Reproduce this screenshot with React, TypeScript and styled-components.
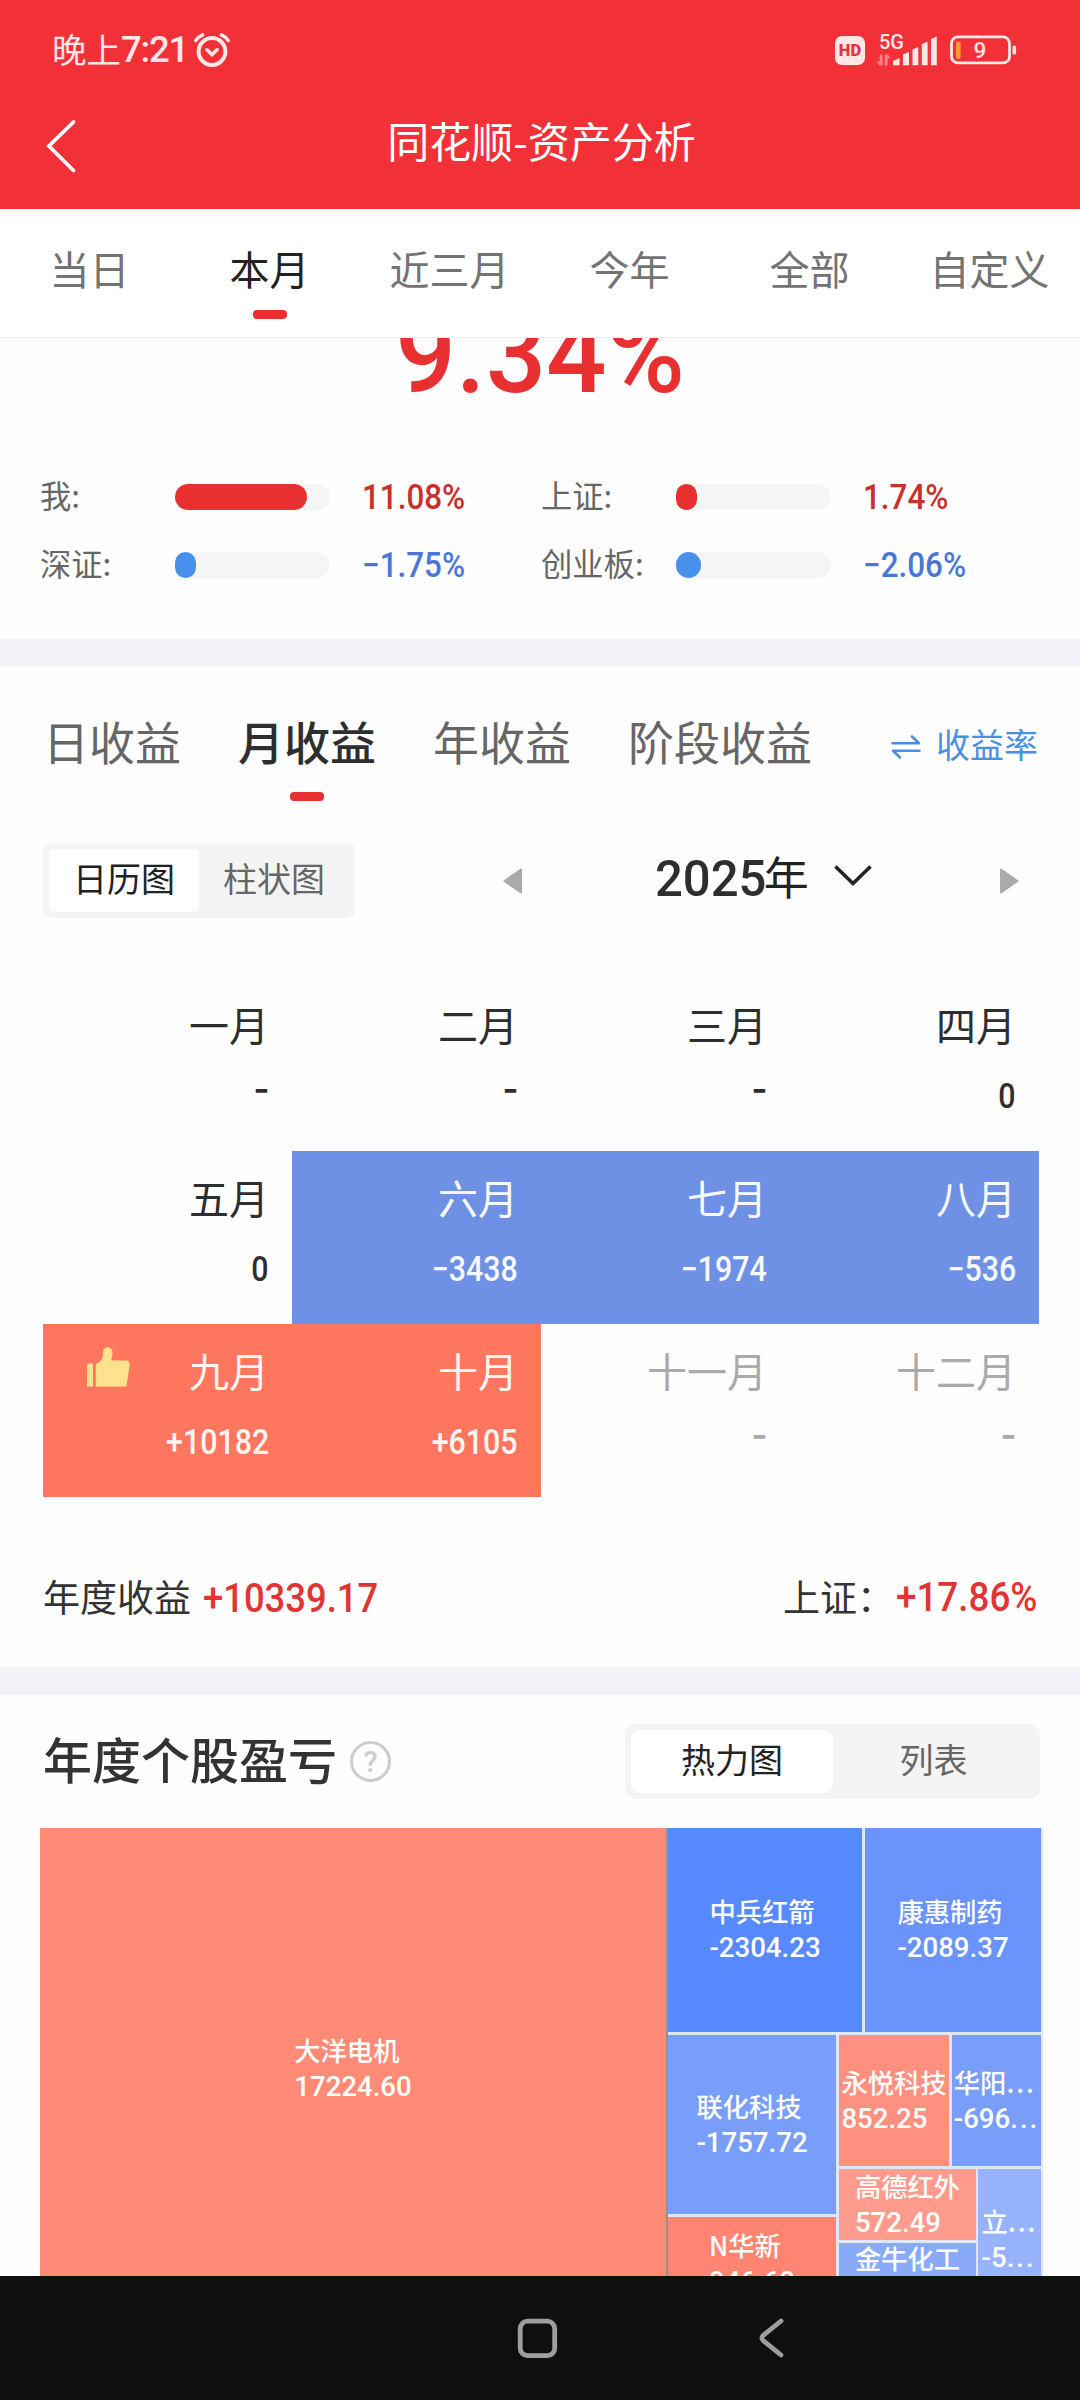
import React from "react";
import styled, { createGlobalStyle } from "styled-components";

const CJK = '"Noto Sans CJK SC", "Noto Sans", sans-serif';
const NUM = 'Roboto, "Noto Sans CJK SC", sans-serif';

const GlobalStyle = createGlobalStyle`
  *, *::before, *::after { box-sizing: border-box; }
  html, body { margin: 0; padding: 0; background: #fff; }
  body { font-family: ${CJK}; color: #333; }
`;

const Screen = styled.div`
  width: 1080px;
  height: 2400px;
  display: flex;
  flex-direction: column;
  overflow: hidden;
  background: #fefefe;
`;

/* ---------- header ---------- */
const Header = styled.header`
  flex: none;
  height: 209px;
  background: #f23037;
  color: #fff;
`;
const StatusBar = styled.div`
  height: 100px;
  padding: 0 63px 0 52px;
  display: flex;
  align-items: center;
  color: #ffe6e7;
`;
const Clock = styled.div`
  display: flex;
  align-items: center;
  font-size: 34.5px;
  line-height: 50px;
  margin-top: -4px;
`;
const ClockDigits = styled.span`
  font-family: ${NUM};
  font-size: 36.5px;
  font-weight: 500;
  letter-spacing: -1.2px;
  margin-top: 4px;
`;
const AlarmIcon = styled.svg`
  margin-left: 5px;
`;
const StatusRight = styled.div`
  margin-left: auto;
  display: flex;
  align-items: center;
`;
const HdBadge = styled.span`
  width: 30px;
  height: 29px;
  border-radius: 7px;
  background: #ffe6e7;
  color: #e0353c;
  font: 900 16.5px/30px ${NUM};
  text-align: center;
`;
const Network = styled.div`
  width: 61px;
  height: 32px;
  margin: -1px 13px 0 11px;
  display: grid;
`;
const NetLabel = styled.span`
  grid-area: 1 / 1;
  padding-left: 3px;
  font: 500 20px/16px ${NUM};
`;
const NetBars = styled.svg`
  grid-area: 1 / 1;
`;
const TitleBar = styled.div`
  height: 80px;
  display: grid;
  grid-template-columns: 120px 1fr 120px;
  align-items: center;
`;
const Title = styled.h1`
  margin: 0;
  font-size: 42px;
  font-weight: 400;
  line-height: 80px;
  text-align: center;
  padding-left: 3px;
`;
const BackIcon = styled.svg`
  margin: 12px 0 0 44px;
`;

/* ---------- period tabs ---------- */
const PeriodTabs = styled.nav`
  flex: none;
  height: 129px;
  display: flex;
  border-bottom: 1px solid #f0f0f0;
  background: #fff;
`;
const PeriodTab = styled.button<{ $on?: boolean }>`
  flex: 0 0 180px;
  padding: 29px 1px 0 0;
  border: 0;
  background: none;
  display: flex;
  flex-direction: column;
  align-items: center;
  font: 400 40px/60px ${CJK};
  color: ${(p) => (p.$on ? "#222" : "#737373")};
`;
const Underline = styled.i<{ $top: number }>`
  display: block;
  width: 34px;
  height: 9px;
  margin-top: ${(p) => p.$top}px;
  border-radius: 4px;
  background: #e83030;
`;

/* ---------- numbers ---------- */
const Num = styled.span<{ $size: number; $sx?: number; $color?: string; $from?: string; $w?: number }>`
  display: inline-block;
  font-family: ${NUM};
  font-size: ${(p) => p.$size}px;
  font-weight: ${(p) => p.$w ?? 500};
  line-height: 1;
  white-space: nowrap;
  color: ${(p) => p.$color ?? "inherit"};
  transform: scaleX(${(p) => p.$sx ?? 1});
  transform-origin: ${(p) => p.$from ?? "left"} center;
`;

/* ---------- body ---------- */
const Body = styled.main`
  flex: 1;
  min-height: 0;
  overflow: hidden;
`;
const Divider = styled.div`
  height: 28px;
  background: #f2f3f8;
`;
const Summary = styled.section`
  height: 301px;
`;
const Hero = styled.div`
  height: 125px;
  overflow: hidden;
  text-align: center;
`;
const HeroValue = styled.div`
  margin-top: -40px;
  line-height: 0;
`;
const Benchmarks = styled.div`
  display: grid;
  grid-template-columns: 501px 1fr;
  grid-auto-rows: 68px;
  padding-left: 40px;
`;
const Benchmark = styled.div`
  display: flex;
  align-items: center;
`;
const BenchLabel = styled.span`
  width: 135px;
  font-size: 31.3px;
  line-height: 44px;
  margin-top: -5px;
  color: #666;
`;
const Track = styled.div`
  width: 155px;
  height: 26px;
  margin-right: 32px;
  border-radius: 13px;
  background: #f4f6f6;
`;
const Fill = styled.div<{ $up: boolean; $w: number }>`
  width: ${(p) => p.$w}px;
  height: 100%;
  border-radius: 13px;
  background: ${(p) => (p.$up ? "#e83030" : "#4791ec")};
`;

/* ---------- calendar ---------- */
const ProfitTabs = styled.div`
  height: 134px;
  padding: 43px 41px 0 43px;
  display: flex;
  gap: 57px;
`;
const ProfitTab = styled.button<{ $on?: boolean }>`
  padding: 0;
  border: 0;
  background: none;
  display: flex;
  flex-direction: column;
  align-items: center;
  font: ${(p) => (p.$on ? 500 : 400)} 46px/61px ${CJK};
  color: ${(p) => (p.$on ? "#2e2e2e" : "#666")};
`;
const RateSwitch = styled.button`
  height: 64px;
  margin-left: auto;
  padding: 3px 1px 0 0;
  border: 0;
  background: none;
  display: flex;
  align-items: center;
  gap: 15px;
  font: 400 34px/61px ${CJK};
  color: #4a90e2;
`;
const SwapIcon = styled.svg`
  margin-top: 7px;
`;
const Controls = styled.div`
  height: 75px;
  margin-top: 42px;
  padding: 0 61px 0 43px;
  display: flex;
  align-items: center;
`;
const Segmented = styled.div<{ $r: number }>`
  flex: none;
  height: 75px;
  padding: 6px;
  display: flex;
  border-radius: ${(p) => p.$r + 2}px;
  background: #f4f4f4;
`;
const Segment = styled.button<{ $on?: boolean; $w: number; $r: number }>`
  width: ${(p) => p.$w}px;
  height: 63px;
  padding: 0 0 6px;
  border: 0;
  border-radius: ${(p) => p.$r}px;
  background: ${(p) => (p.$on ? "#fff" : "transparent")};
  color: ${(p) => (p.$on ? "#222" : "#666")};
  font: 400 34px/55px ${CJK};
`;
const PrevIcon = styled.svg`
  margin-left: 148px;
`;
const NextIcon = styled.svg`
  margin-left: auto;
`;
const Year = styled.div`
  margin: -3px 0 0 132px;
  display: flex;
  align-items: center;
  font-size: 45px;
  line-height: 60px;
  color: #2e2e2e;
`;
const YearUnit = styled.span`
  margin: -6px 0 0 -5px;
  color: #222;
`;
const DownIcon = styled.svg`
  margin: -6px 0 0 24px;
`;
const Calendar = styled.div`
  margin: 60px 41px 0 43px;
  display: grid;
  grid-template-columns: repeat(4, 249px);
  grid-auto-rows: 173px;
`;
const tones = {
  none: ["transparent", "#2e2e2e"],
  off: ["transparent", "#aaa"],
  down: ["#6e91e5", "#f7f9ff"],
  up: ["#ff765f", "#fff6f4"],
};
type Tone = keyof typeof tones;
const MonthCell = styled.div<{ $tone: Tone }>`
  padding: 16px 23px 0 0;
  display: flex;
  flex-direction: column;
  align-items: flex-end;
  background: ${(p) => tones[p.$tone][0]};
  color: ${(p) => tones[p.$tone][1]};
`;
const MonthName = styled.div`
  width: 100%;
  display: flex;
  align-items: center;
  justify-content: flex-end;
  font-size: 40px;
  line-height: 60px;
`;
const ThumbIcon = styled.svg`
  margin: -6px auto 0 43px;
`;
const MonthValue = styled.div`
  height: 35px;
  margin-top: 25px;
  line-height: 0;
`;
const Dash = styled.span`
  display: block;
  margin-top: -14px;
  font: 500 43px/38px ${CJK};
`;
const YearTotals = styled.div`
  height: 170px;
  padding: 28px 41px 0 43px;
  display: flex;
  align-items: center;
  font-size: 37px;
  line-height: 56px;
  color: #333;
`;
const IndexLabel = styled.span`
  margin: 0 2px 0 auto;
`;
const TotalValue = styled.span<{ $w: number; $dy: number; $ml?: number }>`
  width: ${(p) => p.$w}px;
  margin: ${(p) => p.$dy}px 0 0 ${(p) => p.$ml ?? 0}px;
  line-height: 0;
`;

/* ---------- stocks ---------- */
const StocksHead = styled.div`
  height: 133px;
  padding: 29px 40px 0 43px;
  display: flex;
  align-items: flex-start;
  justify-content: space-between;
`;
const StocksTitle = styled.h2`
  margin: 0;
  height: 75px;
  display: flex;
  align-items: center;
  gap: 13px;
  font-size: 49px;
  font-weight: 500;
  line-height: 68px;
  color: #333;
`;
const TitleText = styled.span`
  margin-top: -7px;
`;
const HelpDot = styled.span`
  width: 41px;
  height: 41px;
  margin-top: -1px;
  border: 3px solid #ccc;
  border-radius: 50%;
  font: 500 29px/36px ${NUM};
  color: #ccc;
  text-align: center;
`;
const TreeMap = styled.div`
  width: 1003px;
  height: 482px;
  margin-left: 40px;
  padding-right: 2px;
  display: flex;
  background: #dfe6f6;
`;
const Col = styled.div<{ $w?: number; $gap?: number }>`
  width: ${(p) => (p.$w ? `${p.$w}px` : "auto")};
  flex: ${(p) => (p.$w ? "none" : 1)};
  min-width: 0;
  display: flex;
  flex-direction: column;
  gap: ${(p) => p.$gap ?? 3}px;
`;
const Row = styled.div<{ $h?: number; $gap?: number }>`
  height: ${(p) => (p.$h ? `${p.$h}px` : "auto")};
  flex: ${(p) => (p.$h ? "none" : 1)};
  min-height: 0;
  display: flex;
  gap: ${(p) => p.$gap ?? 3}px;
`;
const Tile = styled.div<{ $bg: string; $w?: number; $h?: number; $edge?: boolean }>`
  width: ${(p) => (p.$w ? `${p.$w}px` : "auto")};
  height: ${(p) => (p.$h ? `${p.$h}px` : "auto")};
  flex: ${(p) => (p.$w || p.$h ? "none" : 1)};
  min-width: 0;
  border-right: ${(p) => (p.$edge ? "2px solid #97908f" : "0")};
  display: flex;
  flex-direction: column;
  align-items: center;
  justify-content: center;
  background: ${(p) => p.$bg};
  color: #fff;
`;
const TileText = styled.div`
  height: 69px;
  margin-top: -3px;
  font-size: 26.3px;
  font-weight: 500;
  line-height: 34px;
  white-space: nowrap;
`;
const TileValue = styled.div`
  padding-top: 3px;
  font-family: ${NUM};
  font-size: 27.6px;
  font-weight: 500;
  line-height: 34px;
`;
const Dots = styled.span`
  letter-spacing: 2px;
`;

/* ---------- system navigation ---------- */
const NavBar = styled.footer`
  flex: none;
  height: 124px;
  padding-left: 517px;
  display: flex;
  align-items: center;
  gap: 200px;
  background: #0f0f0f;
`;

const periods = ["当日", "本月", "近三月", "今年", "全部", "自定义"];
const benchmarks = [
  { name: "我:", value: "11.08%", up: true, w: 132 },
  { name: "上证:", value: "1.74%", up: true, w: 21 },
  { name: "深证:", value: "−1.75%", up: false, w: 21 },
  { name: "创业板:", value: "−2.06%", up: false, w: 25 },
];
const profitTabs = ["日收益", "月收益", "年收益", "阶段收益"];
const months: { name: string; value: string; tone: Tone; best?: boolean }[] = [
  { name: "一月", value: "-", tone: "none" },
  { name: "二月", value: "-", tone: "none" },
  { name: "三月", value: "-", tone: "none" },
  { name: "四月", value: "0", tone: "none" },
  { name: "五月", value: "0", tone: "none" },
  { name: "六月", value: "−3438", tone: "down" },
  { name: "七月", value: "−1974", tone: "down" },
  { name: "八月", value: "−536", tone: "down" },
  { name: "九月", value: "+10182", tone: "up", best: true },
  { name: "十月", value: "+6105", tone: "up" },
  { name: "十一月", value: "-", tone: "off" },
  { name: "十二月", value: "-", tone: "off" },
];

type StockProps = {
  name: string;
  value?: string;
  cut?: boolean;
  bg: string;
  w?: number;
  h?: number;
  edge?: boolean;
};
const Stock = ({ name, value, cut, bg, w, h, edge }: StockProps) => (
  <Tile $bg={bg} $w={w} $h={h} $edge={edge}>
    <TileText>
      {name}
      {cut && <Dots>...</Dots>}
      {value && (
        <TileValue>
          {value}
          {cut && <Dots>...</Dots>}
        </TileValue>
      )}
    </TileText>
  </Tile>
);

export default function App() {
  return (
    <Screen>
      <GlobalStyle />
      <Header>
        <StatusBar>
          <Clock>
            晚上<ClockDigits>7:21</ClockDigits>
          </Clock>
          <AlarmIcon width="38" height="36" viewBox="0 0 38 36" fill="none" stroke="currentColor" strokeWidth="4" strokeLinecap="round">
            <circle cx="19" cy="19.5" r="13.4" />
            <path d="M2.8 8.6C4.6 6 7 4 9.6 2.9M35.2 8.6C33.4 6 31 4 28.4 2.9" strokeWidth="3.6" />
            <path d="M14 17.8l5 4.8 5-4.8" strokeWidth="3.6" />
          </AlarmIcon>
          <StatusRight>
            <HdBadge>HD</HdBadge>
            <Network>
              <NetLabel>5G</NetLabel>
              <NetBars width="61" height="32" viewBox="0 0 61 32" fill="currentColor">
                <path d="M3.6 20.500h3v11h-3L0 27.600h3.600zM8.600 31.500v-11h3l3.200 3.800h-3.200v7.200z" opacity=".45" />
                <path d="M17 31.3v-4.2l6.5-3.2v7.4zM27 31.3V20.6l6-2.6v13.3zM36.5 31.3V15.6l5.8-2.6v18.3zM45.8 31.3V10.2l5.8-2.6v23.700zM55 31.3V5l5.8-2.6v28.9z" />
              </NetBars>
            </Network>
            <svg width="67" height="30" viewBox="0 0 67 30" fill="none">
              <rect x="1.5" y="1.9" width="58" height="26" rx="6.5" stroke="currentColor" strokeWidth="2.8" />
              <rect x="62.5" y="10.5" width="3.6" height="9" rx="1.6" fill="currentColor" />
              <rect x="6" y="6.5" width="4.6" height="17.5" rx="2" fill="#ff9a2e" />
              <text x="30" y="22.6" textAnchor="middle" fontFamily="Roboto, sans-serif" fontSize="22.500" fontWeight="500" fill="currentColor">9</text>
            </svg>
          </StatusRight>
        </StatusBar>
        <TitleBar>
          <BackIcon width="36" height="56" viewBox="0 0 36 56" fill="none" stroke="#fff" strokeWidth="3.8" strokeLinecap="round">
            <path d="M29.5 4L5 28l24.5 24.5" />
          </BackIcon>
          <Title>同花顺-资产分析</Title>
        </TitleBar>
      </Header>

      <PeriodTabs>
        {periods.map((name, i) => (
          <PeriodTab key={name} $on={i === 1}>
            {name}
            {i === 1 && <Underline $top={12} />}
          </PeriodTab>
        ))}
      </PeriodTabs>

      <Body>
        <Summary>
          <Hero>
            <HeroValue>
              <Num $size={112} $sx={0.95} $w={500} $color="#e83030" $from="center">9.34%</Num>
            </HeroValue>
          </Hero>
          <Benchmarks>
            {benchmarks.map((b) => (
              <Benchmark key={b.name}>
                <BenchLabel>{b.name}</BenchLabel>
                <Track>
                  <Fill $up={b.up} $w={b.w} />
                </Track>
                <Num $size={34.5} $sx={0.91} $color={b.up ? "#c7302b" : "#4a76d8"}>{b.value}</Num>
              </Benchmark>
            ))}
          </Benchmarks>
        </Summary>
        <Divider />

        <section>
          <ProfitTabs>
            {profitTabs.map((name, i) => (
              <ProfitTab key={name} $on={i === 1}>
                {name}
                {i === 1 && <Underline $top={21} />}
              </ProfitTab>
            ))}
            <RateSwitch>
              <SwapIcon width="30" height="24" viewBox="0 0 30 24" fill="none" stroke="currentColor" strokeWidth="2.6" strokeLinecap="round" strokeLinejoin="round">
                <path d="M1.5 8.2h26.5L21 1.5M28.5 15.8H2L9 22.5" />
              </SwapIcon>
              收益率
            </RateSwitch>
          </ProfitTabs>

          <Controls>
            <Segmented $r={6}>
              <Segment $on $w={150} $r={5}>日历图</Segment>
              <Segment $w={150} $r={5}>柱状图</Segment>
            </Segmented>
            <PrevIcon width="20" height="26" viewBox="0 0 20 26" fill="#aaa" stroke="#aaa" strokeWidth="2" strokeLinejoin="round">
              <path d="M18 1.5v23L1.5 13z" />
            </PrevIcon>
            <Year>
              <Num $size={50} $sx={0.98} $w={500}>2025</Num>
              <YearUnit>年</YearUnit>
              <DownIcon width="40" height="26" viewBox="0 0 40 26" fill="none" stroke="#222" strokeWidth="3.6">
                <path d="M2.5 3.5L20 20.5 37.5 3.5" />
              </DownIcon>
            </Year>
            <NextIcon width="20" height="26" viewBox="0 0 20 26" fill="#aaa" stroke="#aaa" strokeWidth="2" strokeLinejoin="round">
              <path d="M2 1.5v23L18.5 13z" />
            </NextIcon>
          </Controls>

          <Calendar>
            {months.map((m) => (
              <MonthCell key={m.name} $tone={m.tone}>
                <MonthName>
                  {m.best && (
                    <ThumbIcon width="45" height="41" viewBox="0 0 45 41" fill="#ffe28e">
                      <path d="M1 19a2.5 2.5 0 0 1 2.5-2.500H7V39.500H1z" />
                      <path d="M9.8 39.5V17c4-1.5 7.2-5 7.2-9.500V5a4.700 4.700 0 0 1 9.400 0c.2 3-.4 6-1.400 8.600H40a3.600 3.600 0 0 1 3.600 4.200L40.500 39.500z" />
                    </ThumbIcon>
                  )}
                  {m.name}
                </MonthName>
                <MonthValue>
                  {m.value === "-" ? <Dash>-</Dash> : <Num $size={34.5} $sx={0.88} $from="right">{m.value}</Num>}
                </MonthValue>
              </MonthCell>
            ))}
          </Calendar>

          <YearTotals>
            年度收益
            <TotalValue $w={180} $dy={6} $ml={12}>
              <Num $size={40} $sx={0.91} $color="#e33434">+10339.17</Num>
            </TotalValue>
            <IndexLabel>上证：</IndexLabel>
            <TotalValue $w={143} $dy={3}>
              <Num $size={40} $sx={0.92} $color="#e33434">+17.86%</Num>
            </TotalValue>
          </YearTotals>
        </section>
        <Divider />

        <section>
          <StocksHead>
            <StocksTitle>
              <TitleText>年度个股盈亏</TitleText>
              <HelpDot>?</HelpDot>
            </StocksTitle>
            <Segmented $r={9}>
              <Segment $on $w={202} $r={9}>热力图</Segment>
              <Segment $w={201} $r={9}>列表</Segment>
            </Segmented>
          </StocksHead>
          <TreeMap>
            <Stock name="大洋电机" value="17224.60" bg="#ff8b76" w={628} edge />
            <Col>
              <Row $h={204}>
                <Stock name="中兵红箭" value="-2304.23" bg="#578aff" w={194} />
                <Stock name="康惠制药" value="-2089.37" bg="#6a93fb" />
              </Row>
              <Row>
                <Col $w={168}>
                  <Stock name="联化科技" value="-1757.72" bg="#789efa" h={179} />
                  <Stock name="N华新" value="946.60" bg="#ff8472" />
                </Col>
                <Col>
                  <Row $h={131}>
                    <Stock name="永悦科技" value="852.25" bg="#ff907f" w={110} />
                    <Stock name="华阳" value="-696" cut bg="#789efa" />
                  </Row>
                  <Row $gap={2}>
                    <Col $w={137}>
                      <Stock name="高德红外" value="572.49" bg="#ff9b8c" h={71} />
                      <Stock name="金牛化工" bg="#88aaf9" />
                    </Col>
                    <Stock name="立" value="-5" cut bg="#97b3fd" />
                  </Row>
                </Col>
              </Row>
            </Col>
          </TreeMap>
        </section>
      </Body>

      <NavBar>
        <svg width="41" height="41" viewBox="0 0 41 41" fill="none" stroke="#9e9e9e" strokeWidth="4.8">
          <rect x="3.2" y="3.2" width="34.5" height="34.5" rx="7.5" />
        </svg>
        <svg width="28" height="42" viewBox="0 0 28 42" fill="none" stroke="#9e9e9e" strokeWidth="4.8" strokeLinecap="round" strokeLinejoin="round">
          <path d="M23 4L5.5 18.2Q2.2 21 5.5 23.8L23 38" />
        </svg>
      </NavBar>
    </Screen>
  );
}
